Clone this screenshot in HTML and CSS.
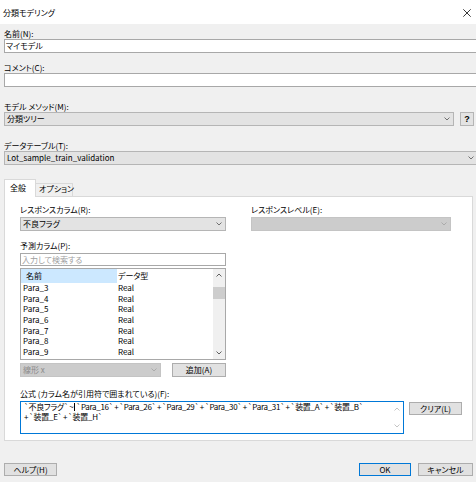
FILE: index.html
```html
<!DOCTYPE html>
<html lang="ja">
<head>
<meta charset="utf-8">
<title>分類モデリング</title>
<link rel="stylesheet" href="styles.css">
</head>
<body>
<div class="titlebar">
  <span class="title">分類モデリング</span>
  <svg class="close" width="8" height="8" viewBox="0 0 8 8"><path d="M0.3 0.3 L7.7 7.7 M7.7 0.3 L0.3 7.7" stroke="#222" stroke-width="0.9" fill="none"/></svg>
</div>
<div class="main">
  <div class="label l-name">名前(N):</div>
  <div class="textbox wide">マイモデル</div>

  <div class="label l-comment">コメント(C):</div>
  <div class="textbox wide"></div>

  <div class="label l-method">モデル メソッド(M):</div>
  <div class="method-row">
    <div class="select method-select"><span>分類ツリー</span><svg class="chev" width="6" height="4" viewBox="0 0 6 4"><polyline points="0.5,0.5 3,3 5.5,0.5" fill="none" stroke="#707070"/></svg></div>
    <div class="qbtn">?</div>
  </div>

  <div class="label l-table">データテーブル(T):</div>
  <div class="select table-select"><span>Lot_sample_train_validation</span><svg class="chev" width="6" height="4" viewBox="0 0 6 4"><polyline points="0.5,0.5 3,3 5.5,0.5" fill="none" stroke="#707070"/></svg></div>

  <div class="tabs">
    <div class="tab active">全般</div>
    <div class="tab">オプション</div>
  </div>
  <div class="panel">
    <div class="cols">
      <div class="col">
        <div class="label">レスポンスカラム(R):</div>
        <div class="select field-gap"><span>不良フラグ</span><svg class="chev" width="6" height="4" viewBox="0 0 6 4"><polyline points="0.5,0.5 3,3 5.5,0.5" fill="none" stroke="#707070"/></svg></div>
      </div>
      <div class="col">
        <div class="label">レスポンスレベル(E):</div>
        <div class="select disabled field-gap"><span></span><svg class="chev" width="6" height="4" viewBox="0 0 6 4"><polyline points="0.5,0.5 3,3 5.5,0.5" fill="none" stroke="#ababab"/></svg></div>
      </div>
    </div>

    <div class="left">
      <div class="label l-predict">予測カラム(P):</div>
      <div class="search field-gap">入力して検索する</div>
      <div class="list">
        <div class="list-body">
          <div class="list-head">
            <div class="c1 sel">名前</div>
            <div class="c2">データ型</div>
          </div>
          <div class="row"><div class="c1">Para_3</div><div class="c2">Real</div></div>
          <div class="row"><div class="c1">Para_4</div><div class="c2">Real</div></div>
          <div class="row"><div class="c1">Para_5</div><div class="c2">Real</div></div>
          <div class="row"><div class="c1">Para_6</div><div class="c2">Real</div></div>
          <div class="row"><div class="c1">Para_7</div><div class="c2">Real</div></div>
          <div class="row"><div class="c1">Para_8</div><div class="c2">Real</div></div>
          <div class="row"><div class="c1">Para_9</div><div class="c2">Real</div></div>
        </div>
        <div class="vscroll">
          <svg class="arrow" width="6" height="4" viewBox="0 0 6 4"><polyline points="0.5,3.5 3,1 5.5,3.5" fill="none" stroke="#606060"/></svg>
          <div class="thumb"></div>
          <div class="spacer"></div>
          <svg class="arrow" width="6" height="4" viewBox="0 0 6 4"><polyline points="0.5,0.5 3,3 5.5,0.5" fill="none" stroke="#606060"/></svg>
        </div>
      </div>
      <div class="add-row">
        <div class="select disabled linear"><span>線形 x</span><svg class="chev" width="6" height="4" viewBox="0 0 6 4"><polyline points="0.5,0.5 3,3 5.5,0.5" fill="none" stroke="#ababab"/></svg></div>
        <div class="btn add">追加(A)</div>
      </div>
    </div>

    <div class="label l-formula">公式 (カラム名が引用符で囲まれている)(F):</div>
    <div class="formula-row">
      <div class="formula">
        <div class="formula-text">
          <div class="fline">`不良フラグ` ~ <span class="caret"></span>`Para_16` + `Para_26` + `Para_29` + `Para_30` + `Para_31` + `装置_A` + `装置_B`</div>
          <div class="fline">+ `装置_E` + `装置_H`</div>
        </div>
        <div class="fscroll">
          <svg width="6" height="4" viewBox="0 0 6 4"><polyline points="0.5,3.5 3,1 5.5,3.5" fill="none" stroke="#c4c4c4"/></svg>
          <svg width="6" height="4" viewBox="0 0 6 4"><polyline points="0.5,0.5 3,3 5.5,0.5" fill="none" stroke="#c4c4c4"/></svg>
        </div>
      </div>
      <div class="btn clear">クリア(L)</div>
    </div>
  </div>

  <div class="footer">
    <div class="btn help">ヘルプ(H)</div>
    <div class="footer-right">
      <div class="btn ok">OK</div>
      <div class="btn cancel">キャンセル</div>
    </div>
  </div>
</div>
</body>
</html>
```

FILE: styles.css
```css
* { box-sizing: border-box; }
html, body { margin: 0; padding: 0; }
body {
  width: 476px;
  height: 482px;
  overflow: hidden;
  background: #f0f0f0;
  font-family: "Noto Sans CJK JP", "Noto Sans", sans-serif;
  font-size: 8px;
  line-height: 10px;
  color: #000;
  font-feature-settings: "palt";
}

.titlebar {
  height: 24px;
  background: #fff;
  display: flex;
  align-items: center;
  justify-content: space-between;
  padding: 1px 5px 0 3px;
}

.main { padding-left: 4px; }

.label { height: 10px; white-space: nowrap; }
.l-name { margin-top: 5px; }
.l-comment { margin-top: 10px; }
.l-method { margin-top: 15px; }
.l-table { margin-top: 15px; }

.textbox {
  height: 14px;
  background: #fff;
  border: 1px solid #a8a8a8;
  padding-left: 1px;
  line-height: 12px;
}
.wide { margin-right: -6px; }

.select {
  height: 14px;
  background: #e3e3e3;
  border: 1px solid #b5b5b5;
  display: flex;
  align-items: center;
  justify-content: space-between;
  padding: 0 3px 0 2px;
  white-space: nowrap;
}
.select.disabled { background: #cccccc; border-color: #c4c4c4; color: #8a8a8a; }

.method-row { display: flex; gap: 6px; }
.method-select { width: 450px; }
.qbtn {
  width: 14px;
  height: 14px;
  background: #e3e3e3;
  border: 1px solid #b5b5b5;
  font-family: "Liberation Sans", sans-serif;
  font-weight: bold;
  font-size: 9px;
  line-height: 12px;
  text-align: center;
}
.table-select { margin-right: -2px; }

.tabs {
  display: flex;
  height: 18px;
  margin-top: 14px;
  margin-bottom: -1px;
}
.tab {
  width: 37px;
  height: 13px;
  margin-top: 4px;
  border: 1px solid #d9d9d9;
  border-left: none;
  border-bottom: none;
  background: #f0f0f0;
  padding-left: 3px;
  white-space: nowrap;
}
.tab.active {
  width: 32px;
  height: 18px;
  margin-top: 0;
  border-left: 1px solid #d9d9d9;
  background: #fff;
  padding: 3px 0 0 5px;
  position: relative;
  z-index: 1;
}

.panel {
  width: 469px;
  height: 245px;
  background: #fff;
  border: 1px solid #d9d9d9;
  padding: 8px 0 0 15px;
}

.cols { display: grid; grid-template-columns: 206px 200px; column-gap: 25px; }
.field-gap { margin-top: 2px; }

.left { width: 206px; }
.l-predict { margin-top: 10px; }
.search {
  height: 13px;
  background: #fff;
  border: 1px solid #a8a8a8;
  padding-left: 1px;
  line-height: 11px;
  color: #a0a0a0;
}

.list {
  margin-top: 2px;
  height: 92px;
  border: 1px solid #a8a8a8;
  display: flex;
  overflow: hidden;
}
.list-body { flex: 1; }
.list-head { display: flex; height: 14px; line-height: 13px; }
.list-head .c1 { padding-left: 5px; }
.sel { background: #cce8ff; }
.row { display: flex; height: 10.7px; line-height: 10.7px; }
.c1 { width: 96px; padding-left: 2px; }
.c2 { padding-left: 1px; }
.vscroll {
  width: 12px;
  background: #f0f0f0;
  display: flex;
  flex-direction: column;
  align-items: center;
  padding: 4px 0 4px;
}
.arrow { flex: none; }
.thumb { width: 12px; height: 12px; background: #cdcdcd; margin-top: 10px; }
.spacer { flex: 1; }

.add-row { display: flex; justify-content: space-between; margin-top: 3px; }
.linear { width: 141px; }

.btn {
  height: 14px;
  background: #e1e1e1;
  border: 1px solid #adadad;
  text-align: center;
  line-height: 12px;
  white-space: nowrap;
}
.add { width: 54px; }

.l-formula { margin-top: 12px; }
.formula-row { display: flex; align-items: flex-start; margin-top: 2px; }
.formula {
  width: 384px;
  height: 33px;
  border: 1px solid #0078d7;
  background: #fff;
  display: flex;
}
.formula-text {
  flex: 1;
  padding-left: 3px;
  line-height: 9.5px;
  white-space: nowrap;
  overflow: hidden;
  letter-spacing: -0.3px;
  word-spacing: -0.6px;
}
.fline { white-space: pre; }
.caret { display: inline-block; width: 1px; height: 8px; background: #000; vertical-align: -1px; margin-right: 1px; }
.fscroll {
  width: 13px;
  flex: none;
  display: flex;
  flex-direction: column;
  align-items: center;
  justify-content: space-between;
  padding: 5px 0 5px;
}
.clear { width: 53px; height: 13px; line-height: 11px; margin: 1px 0 0 5px; }

.footer {
  width: 469px;
  margin-top: 22px;
  display: flex;
  justify-content: space-between;
}
.footer .btn { height: 13px; line-height: 11px; }
.footer-right { display: flex; gap: 7px; }
.help { width: 53px; }
.ok { width: 52px; border-color: #0078d7; }
.cancel { width: 55px; }
```
